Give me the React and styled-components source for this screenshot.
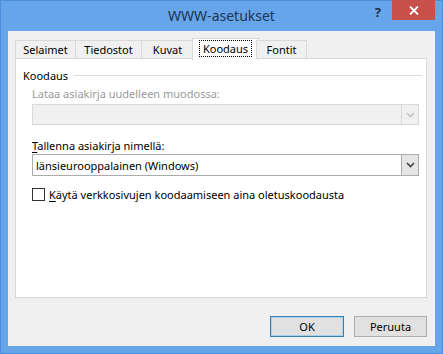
import React from 'react';
import styled, { createGlobalStyle } from 'styled-components';

const GlobalStyle = createGlobalStyle`
  html, body {
    margin: 0;
    padding: 0;
    background: #ffffff;
  }
  body {
    font-family: "Noto Sans", "Open Sans", sans-serif;
    font-size: 11px;
    color: #000;
  }
`;

const Frame = styled.div`
  width: 443px;
  height: 354px;
  box-sizing: border-box;
  background: #67a5ea;
  border: 1px solid #4b8fdc;
  display: flex;
  flex-direction: column;
  padding: 0 7px 7px 7px;
`;

const TitleBar = styled.div`
  height: 30px;
  position: relative;
  display: flex;
  align-items: center;
  justify-content: center;
`;

const Title = styled.div`
  font-size: 14px;
  color: #1c3553;
  margin-top: -2px;
`;

const HelpButton = styled.div`
  position: absolute;
  right: 54px;
  top: 2px;
  font-size: 13px;
  font-weight: bold;
  color: #1f2f42;
`;

const CloseButton = styled.div`
  position: absolute;
  right: 0;
  top: -1px;
  width: 43px;
  height: 20px;
  background: #c7504b;
  display: flex;
  align-items: center;
  justify-content: center;
`;

const Client = styled.div`
  flex: 1;
  background: #f0f0f0;
  padding: 7px 8px 9px 7px;
  display: flex;
  flex-direction: column;
`;

const TabStrip = styled.div`
  display: flex;
  align-items: flex-end;
  height: 21px;
  position: relative;
  z-index: 1;
`;

const Tab = styled.div`
  box-sizing: border-box;
  height: ${p => (p.$active ? '22px' : '19px')};
  width: ${p => p.$w}px;
  margin: ${p => (p.$active ? '0 -2px -1px -2px' : '0')};
  border: 1px solid #d9d9d9;
  border-bottom: ${p => (p.$active ? 'none' : '1px solid #d9d9d9')};
  margin-left: ${p => (p.$first ? '0' : p.$active ? '-2px' : '-1px')};
  background: ${p => (p.$active ? '#ffffff' : '#f0f0f0')};
  display: flex;
  align-items: center;
  justify-content: center;
  padding-bottom: ${p => (p.$active ? '2px' : '0')};
`;

const FocusLabel = styled.span`
  border: 1px dotted #000;
  padding: 0 3px;
  line-height: 15px;
`;

const Panel = styled.div`
  box-sizing: border-box;
  height: 240px;
  background: #ffffff;
  border: 1px solid #d9d9d9;
  margin-top: -1px;
  padding: 8px 7px 0 7px;
`;

const GroupHeader = styled.div`
  display: flex;
  align-items: center;
  gap: 6px;
  height: 16px;
`;

const GroupRule = styled.div`
  flex: 1;
  height: 1px;
  background: #dcdcdc;
  margin-right: -3px;
`;

const GroupBody = styled.div`
  padding: 0 0 0 9px;
  width: 387px;
`;

const FieldLabel = styled.div`
  color: ${p => (p.$disabled ? '#9a9a9a' : '#000')};
  margin-top: ${p => p.$top}px;
  height: 16px;
  line-height: 16px;
`;

const U = styled.span`
  text-decoration: underline;
  text-underline-offset: 2px;
`;

const Select = styled.div`
  box-sizing: border-box;
  height: ${p => (p.$disabled ? 21 : 22)}px;
  margin-top: ${p => p.$top}px;
  border: 1px solid ${p => (p.$disabled ? '#d9d9d9' : '#acacac')};
  background: ${p => (p.$disabled ? '#f0f0f0' : '#ffffff')};
  display: flex;
  align-items: center;
`;

const SelectText = styled.div`
  flex: 1;
  padding-left: 3px;
`;

const ArrowBox = styled.div`
  box-sizing: border-box;
  width: 17px;
  height: 100%;
  border-left: 1px solid ${p => (p.$disabled ? '#d9d9d9' : '#acacac')};
  background: ${p => (p.$disabled ? '#f0f0f0' : '#e5e5e5')};
  display: flex;
  align-items: center;
  justify-content: center;
`;

const CheckRow = styled.div`
  display: flex;
  align-items: center;
  gap: 4px;
  margin-top: 10px;
  height: 16px;
`;

const CheckBox = styled.div`
  box-sizing: border-box;
  width: 13px;
  height: 13px;
  border: 1px solid #333333;
  background: #fff;
`;

const ButtonRow = styled.div`
  display: flex;
  justify-content: flex-end;
  gap: 10px;
  margin-top: 18px;
`;

const Button = styled.div`
  box-sizing: border-box;
  width: ${p => p.$w}px;
  height: 21px;
  background: #e1e1e1;
  border: 1px solid ${p => (p.$default ? '#3c7fb1' : '#adadad')};
  box-shadow: ${p => (p.$default ? 'inset 0 0 0 1px #a9d1f0' : 'none')};
  display: flex;
  align-items: center;
  justify-content: center;
`;

const Chevron = ({ color }) => (
  <svg width="9" height="6" viewBox="0 0 9 6">
    <path d="M1 1 L4.5 4.5 L8 1" fill="none" stroke={color} strokeWidth="1.6" />
  </svg>
);

const tabs = [
  { label: 'Selaimet', w: 61 },
  { label: 'Tiedostot', w: 67 },
  { label: 'Kuvat', w: 53 },
  { label: 'Koodaus', w: 67, active: true },
  { label: 'Fontit', w: 51 },
];

export default function App() {
  return (
    <>
      <GlobalStyle />
      <Frame>
        <TitleBar>
          <Title>WWW-asetukset</Title>
          <HelpButton>?</HelpButton>
          <CloseButton>
            <svg width="10" height="9" viewBox="0 0 10 9">
              <path d="M1 0.5 L9 8.5 M9 0.5 L1 8.5" stroke="#ffffff" strokeWidth="1.8" />
            </svg>
          </CloseButton>
        </TitleBar>
        <Client>
          <TabStrip>
            {tabs.map((t, i) => (
              <Tab key={t.label} $w={t.w} $active={t.active} $first={i === 0}>
                {t.active ? <FocusLabel>{t.label}</FocusLabel> : t.label}
              </Tab>
            ))}
          </TabStrip>
          <Panel>
            <GroupHeader>
              <span>Koodaus</span>
              <GroupRule />
            </GroupHeader>
            <GroupBody>
              <FieldLabel $disabled $top={3}>Lataa asiakirja uudelleen muodossa:</FieldLabel>
              <Select $disabled $top={2}>
                <SelectText />
                <ArrowBox $disabled>
                  <Chevron color="#c4c4c4" />
                </ArrowBox>
              </Select>
              <FieldLabel $top={13}>
                <U>T</U>allenna asiakirja nimellä:
              </FieldLabel>
              <Select $top={0}>
                <SelectText>länsieurooppalainen (Windows)</SelectText>
                <ArrowBox>
                  <Chevron color="#404040" />
                </ArrowBox>
              </Select>
              <CheckRow>
                <CheckBox />
                <span>
                  <U>K</U>äytä verkkosivujen koodaamiseen aina oletuskoodausta
                </span>
              </CheckRow>
            </GroupBody>
          </Panel>
          <ButtonRow>
            <Button $w={74} $default>OK</Button>
            <Button $w={73}>Peruuta</Button>
          </ButtonRow>
        </Client>
      </Frame>
    </>
  );
}
